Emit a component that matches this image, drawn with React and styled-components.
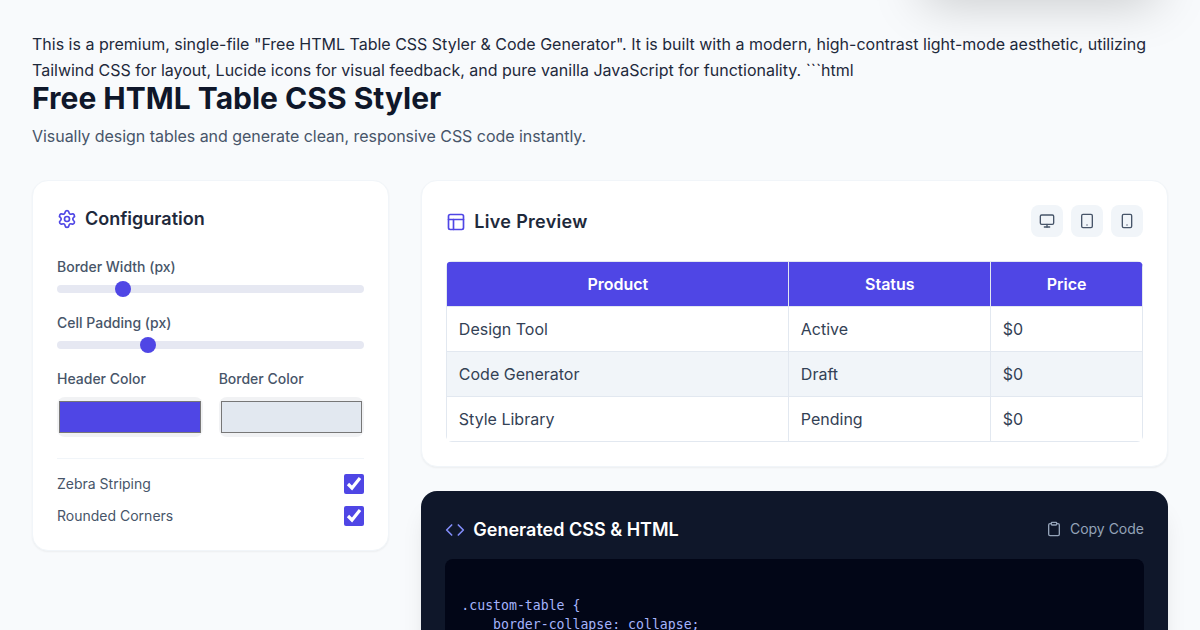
import React from 'react';
import styled, { createGlobalStyle } from 'styled-components';
import { Settings, PanelsTopLeft, Monitor, Tablet, Smartphone, Code, Clipboard } from 'lucide-react';

const GlobalStyle = createGlobalStyle`
    * { box-sizing: border-box; }
    html { overflow: hidden; }
    body {
        margin: 0;
        background-color: #f8fafc;
        color: #1e293b;
        font-family: Inter, "Noto Sans", sans-serif;
    }
`;

const Page = styled.div`
    padding: 32px;
`;
const Toast = styled.div`
    position: fixed;
    top: -74px;
    right: 32px;
    width: 256px;
    height: 60px;
    background-color: #fff;
    border-radius: 12px;
    box-shadow: 0 25px 50px -12px rgba(0, 0, 0, 0.25);
`;
const Intro = styled.p`
    margin: 0;
    font-size: 16px;
    line-height: 25.6px;
`;
const Title = styled.h1`
    margin: 0;
    font-size: 30px;
    line-height: 31px;
    font-weight: 700;
    color: #0f172a;
`;
const Subtitle = styled.p`
    margin: 10px 0 32px;
    font-size: 16px;
    line-height: 24px;
    letter-spacing: -0.04px;
    color: #475569;
`;
const Layout = styled.div`
    display: grid;
    grid-template-columns: repeat(3, 1fr);
    gap: 32px;
    align-items: start;
`;
const Card = styled.section`
    background-color: #fff;
    border: 1px solid #f1f5f9;
    border-radius: 16px;
    padding: 24px;
    box-shadow: 0 1px 2px rgba(0, 0, 0, 0.05);
`;
const MainColumn = styled.div`
    grid-column: span 2;
    display: flex;
    flex-direction: column;
    gap: 24px;
`;
const CardHeader = styled.div`
    display: flex;
    align-items: center;
    justify-content: space-between;
    margin-bottom: ${p => p.$gap}px;
`;
const CardTitle = styled.h2`
    display: flex;
    align-items: center;
    gap: 8px;
    margin: 0;
    padding-top: ${p => p.$top ?? 1}px;
    font-size: 18px;
    line-height: 28px;
    font-weight: 600;
    letter-spacing: ${p => p.$spacing || 0}px;
    color: ${p => p.$dark ? '#fff' : '#1e293b'};
    svg { color: ${p => p.$dark ? '#818cf8' : '#4f46e5'}; }
`;
const Field = styled.div`
    margin-bottom: 20px;
`;
const Label = styled.label`
    display: block;
    margin-bottom: 8px;
    font-size: 14px;
    line-height: 20px;
    font-weight: 500;
    color: #475569;
`;
const Slider = styled.input`
    display: block;
    width: 100%;
    height: 8px;
    margin: 0;
    appearance: none;
    background-color: #e6e8f2;
    border-radius: 8px;
    &::-webkit-slider-thumb {
        appearance: none;
        width: 16px;
        height: 16px;
        border-radius: 50%;
        background-color: #4f46e5;
    }
`;
const ColorGrid = styled.div`
    display: grid;
    grid-template-columns: repeat(2, 1fr);
    gap: 16px;
`;
const ColorInput = styled.input`
    display: block;
    width: 100%;
    height: 40px;
    padding: 0;
    border: none;
    border-radius: 8px;
    background-color: #f1f2f4;
    cursor: pointer;
`;
const Options = styled.div`
    display: flex;
    flex-direction: column;
    gap: 12px;
    margin-top: 21px;
    padding-top: 15px;
    border-top: 1px solid #f1f5f9;
`;
const Option = styled.label`
    display: flex;
    align-items: center;
    justify-content: space-between;
    font-size: 14px;
    line-height: 20px;
    color: #475569;
`;
const Check = styled.input`
    width: 20px;
    height: 20px;
    margin: 0;
    accent-color: #4f46e5;
`;
const DeviceButtons = styled.div`
    display: flex;
    gap: 8px;
`;
const DeviceButton = styled.button`
    display: flex;
    align-items: center;
    justify-content: center;
    width: 32px;
    height: 32px;
    padding: 0;
    border: none;
    border-radius: 8px;
    background-color: #f1f5f9;
    color: #475569;
`;
const TableWrap = styled.div`
    border-radius: 6px;
    overflow: hidden;
`;
const Table = styled.table`
    width: 100%;
    table-layout: fixed;
    border-collapse: collapse;
    font-size: 16px;
`;
const Th = styled.th`
    height: 45px;
    padding: 0 12px;
    background-color: #4f46e5;
    border: 1px solid #e2e8f0;
    color: #fff;
    font-weight: 600;
    text-align: center;
`;
const Td = styled.td`
    height: 45px;
    padding: 0 12px 0 11.5px;
    border: 1px solid #e2e8f0;
    color: #334155;
`;
const Row = styled.tr`
    background-color: ${p => p.$striped ? '#f1f5f9' : '#fff'};
`;
const CodeCard = styled.section`
    background-color: #0f172a;
    border-radius: 16px;
    padding: 24px;
    box-shadow: 0 20px 25px -5px rgba(0, 0, 0, 0.1), 0 8px 10px -6px rgba(0, 0, 0, 0.1);
`;
const CopyButton = styled.button`
    display: flex;
    align-items: center;
    gap: 8px;
    padding: 0 0 2px;
    border: none;
    background: none;
    color: #94a3b8;
    font-family: inherit;
    font-size: 14px;
`;
const CodeBlock = styled.pre`
    margin: 0;
    padding: 17px 16px;
    background-color: #020617;
    border-radius: 8px;
    color: #a5b4fc;
    font-family: "DejaVu Sans Mono", "Liberation Mono", monospace;
    font-size: 13.2px;
    line-height: 19.5px;
`;

const products = [
    { name: 'Design Tool', status: 'Active', price: '$0' },
    { name: 'Code Generator', status: 'Draft', price: '$0' },
    { name: 'Style Library', status: 'Pending', price: '$0' },
];

const code = `
.custom-table {
    border-collapse: collapse;
    width: 100%;
    font-family: sans-serif;
}`;

export default function App() {
    return (
        <Page>
            <GlobalStyle />
            <Toast />
            <Intro>
                This is a premium, single-file "Free HTML Table CSS Styler &amp; Code Generator". It is built with a modern, high-contrast light-mode aesthetic, utilizing Tailwind CSS for layout, Lucide icons for visual feedback, and pure vanilla JavaScript for functionality. ```html
            </Intro>
            <Title>Free HTML Table CSS Styler</Title>
            <Subtitle>Visually design tables and generate clean, responsive CSS code instantly.</Subtitle>
            <Layout>
                <Card>
                    <CardHeader $gap={24}>
                        <CardTitle $top={0}><Settings size={20} />Configuration</CardTitle>
                    </CardHeader>
                    <Field>
                        <Label>Border Width (px)</Label>
                        <Slider type="range" min="0" max="10" defaultValue="2" />
                    </Field>
                    <Field>
                        <Label>Cell Padding (px)</Label>
                        <Slider type="range" min="4" max="32" defaultValue="12" />
                    </Field>
                    <ColorGrid>
                        <div>
                            <Label>Header Color</Label>
                            <ColorInput type="color" defaultValue="#4f46e5" />
                        </div>
                        <div>
                            <Label>Border Color</Label>
                            <ColorInput type="color" defaultValue="#e2e8f0" />
                        </div>
                    </ColorGrid>
                    <Options>
                        <Option>Zebra Striping<Check type="checkbox" defaultChecked /></Option>
                        <Option>Rounded Corners<Check type="checkbox" defaultChecked /></Option>
                    </Options>
                </Card>
                <MainColumn>
                    <Card>
                        <CardHeader $gap={24}>
                            <CardTitle $top={2} $spacing={0.3}><PanelsTopLeft size={20} />Live Preview</CardTitle>
                            <DeviceButtons>
                                <DeviceButton><Monitor size={16} /></DeviceButton>
                                <DeviceButton><Tablet size={16} /></DeviceButton>
                                <DeviceButton><Smartphone size={16} /></DeviceButton>
                            </DeviceButtons>
                        </CardHeader>
                        <TableWrap>
                            <Table>
                                <colgroup>
                                    <col style={{ width: 342 }} />
                                    <col style={{ width: 202 }} />
                                    <col />
                                </colgroup>
                                <thead>
                                    <tr>
                                        <Th>Product</Th>
                                        <Th>Status</Th>
                                        <Th>Price</Th>
                                    </tr>
                                </thead>
                                <tbody>
                                    {products.map((item, i) => (
                                        <Row key={item.name} $striped={i === 1}>
                                            <Td>{item.name}</Td>
                                            <Td>{item.status}</Td>
                                            <Td>{item.price}</Td>
                                        </Row>
                                    ))}
                                </tbody>
                            </Table>
                        </TableWrap>
                    </Card>
                    <CodeCard>
                        <CardHeader $gap={15}>
                            <CardTitle $dark><Code size={20} />Generated CSS &amp; HTML</CardTitle>
                            <CopyButton><Clipboard size={16} />Copy Code</CopyButton>
                        </CardHeader>
                        <CodeBlock>{code}</CodeBlock>
                    </CodeCard>
                </MainColumn>
            </Layout>
        </Page>
    );
}
